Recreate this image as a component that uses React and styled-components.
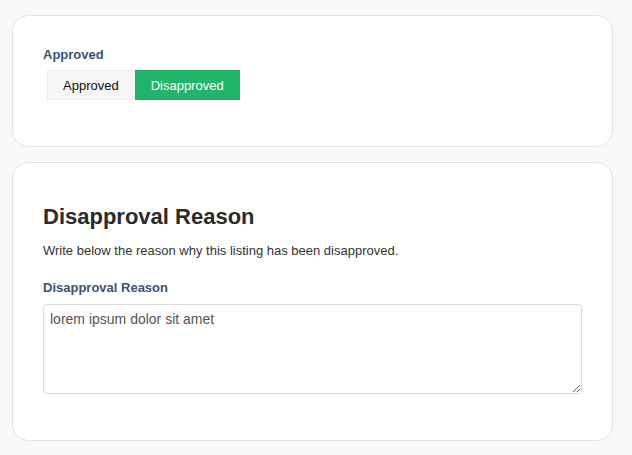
import React, { useState } from 'react';
import styled, { createGlobalStyle, css } from 'styled-components';

const GlobalStyle = createGlobalStyle`
  body {
    margin: 0;
    background: #f8f8f8;
    font-family: "Liberation Sans", Arial, sans-serif;
    color: #333;
  }
`;

const Page = styled.div`
  display: flex;
  flex-direction: column;
  gap: 15px;
  padding: 15px 19px 14px 12px;
`;

const Card = styled.section`
  background: #fff;
  border: 1px solid #e2e2e2;
  border-radius: 16px;
  padding: ${props => props.pad || '30px'};
`;

const Label = styled.div`
  font-size: 13px;
  font-weight: bold;
  color: #3c5374;
  margin-bottom: ${props => props.gap || '8px'};
`;

const Toggle = styled.div`
  display: flex;
  margin-left: 4px;
`;

const ToggleButton = styled.button`
  height: 30px;
  padding: 0 15px;
  font-family: inherit;
  font-size: 13px;
  border: 1px solid #eeeeee;
  background: #f6f6f6;
  color: #111;
  cursor: pointer;
  ${props => props.active && css`
    background: #22b46b;
    border-color: #22b46b;
    color: #fff;
  `}
`;

const Heading = styled.h2`
  margin: 11px 0 13px;
  font-size: 22px;
  font-weight: bold;
  color: #2b2b2b;
`;

const Hint = styled.p`
  margin: 0 0 22px;
  font-size: 13px;
  color: #333;
`;

const TextArea = styled.textarea`
  display: block;
  width: 100%;
  height: 90px;
  box-sizing: border-box;
  padding: 6px 6px;
  border: 1px solid #dcdcdc;
  border-radius: 4px;
  font-family: "Liberation Sans", Arial, sans-serif;
  font-size: 14px;
  color: #555;
  resize: vertical;
  outline: none;
`;

export default function App() {
  const [status, setStatus] = useState('disapproved');
  return (
    <>
      <GlobalStyle />
      <Page>
        <Card pad="31px 30px 46px">
          <Label>Approved</Label>
          <Toggle>
            <ToggleButton active={status === 'approved'} onClick={() => setStatus('approved')}>
              Approved
            </ToggleButton>
            <ToggleButton active={status === 'disapproved'} onClick={() => setStatus('disapproved')}>
              Disapproved
            </ToggleButton>
          </Toggle>
        </Card>
        <Card pad="30px 30px 46px">
          <Heading>Disapproval Reason</Heading>
          <Hint>Write below the reason why this listing has been disapproved.</Hint>
          <Label gap="9px">Disapproval Reason</Label>
          <TextArea defaultValue="lorem ipsum dolor sit amet" />
        </Card>
      </Page>
    </>
  );
}
